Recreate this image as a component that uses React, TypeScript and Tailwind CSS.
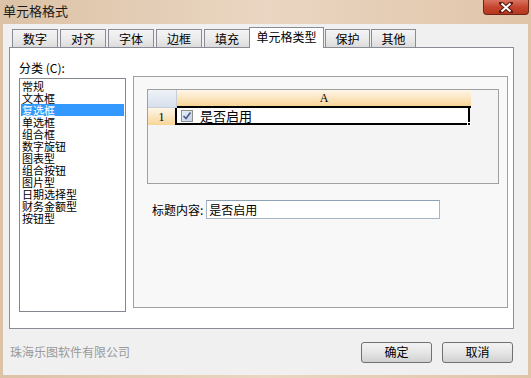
const tabs = ["数字", "对齐", "字体", "边框", "填充"];
const items = [
  "常规",
  "文本框",
  "复选框",
  "单选框",
  "组合框",
  "数字旋钮",
  "图表型",
  "组合按钮",
  "图片型",
  "日期选择型",
  "财务金额型",
  "按钮型",
];

function Tab({ label, w }: { label: string; w: string }) {
  return (
    <div
      className={`${w} h-[18px] flex items-center justify-center border border-b-0 border-[#898c95] bg-gradient-to-b from-[#f4f4f4] via-[#ebebeb] to-[#dcdcdc] text-[12px] leading-[12px] text-black`}
    >
      {label}
    </div>
  );
}

export default function App() {
  return (
    <div className="w-[531px] h-[378px] flex flex-col bg-gradient-to-r from-[#dcc2a6] via-[#ead6c2] to-[#e0c4a8] font-['Noto_Sans_CJK_SC',sans-serif] overflow-hidden">
      {/* Title bar */}
      <div className="h-[24px] flex items-start justify-between">
        <span className="pl-[3px] pt-[3px] text-[13px] leading-[15px] text-[#1a1a1a]">单元格格式</span>
        <div className="mr-[2px] w-[46px] h-[15px] rounded-b-[4px] border border-t-0 border-[#6e2418] bg-gradient-to-b from-[#d8735f] via-[#c6452e] to-[#b5371f] flex items-center justify-center">
          <svg width="14" height="11" viewBox="0 0 14 11">
            <path d="M2 1 L12 10 M12 1 L2 10" stroke="#5a1a10" strokeWidth="4" strokeLinecap="square" />
            <path d="M2.5 1.5 L11.5 9.5 M11.5 1.5 L2.5 9.5" stroke="#ffffff" strokeWidth="2" />
          </svg>
        </div>
      </div>

      {/* Client area */}
      <div className="mx-[3px] mb-[3px] flex-1 bg-[#f0f0f0] pl-[6px] pr-[15px] pt-[3px] flex flex-col">
        {/* Tabs */}
        <div className="ml-[3px] h-[20px] flex items-end relative z-10">
          {tabs.map((t, i) => (
            <div key={t} className={i < tabs.length - 1 ? "mr-[2px]" : ""}>
              <Tab label={t} w="w-[46px]" />
            </div>
          ))}
          <div className="-ml-[1px] -mb-[1px] w-[75px] h-[21px] border border-b-0 border-[#898c95] bg-white flex justify-center pt-[3px] text-[12px] leading-[12px] text-black">
            单元格类型
          </div>
          <div className="ml-[1px]">
            <Tab label="保护" w="w-[45px]" />
          </div>
          <div className="ml-[1px]">
            <Tab label="其他" w="w-[45px]" />
          </div>
        </div>

        {/* Panel */}
        <div className="w-[505px] h-[282px] border border-[#898c95] bg-white flex">
          <div className="ml-[9px] pt-[12px] flex flex-col">
            <div className="h-[16px] flex items-center text-[12px] leading-[12px] text-black">分类 (C):</div>
            <div className="mt-[2px] w-[107px] h-[234px] border border-[#828790] bg-white pt-[1px] pl-[1px]">
              {items.map((it) => (
                <div
                  key={it}
                  className={`h-[12px] w-[103px] pl-[1px] flex items-center text-[11px] leading-[11px] whitespace-nowrap ${
                    it === "复选框" ? "bg-[#3399ff] text-white" : "text-black"
                  }`}
                >
                  {it}
                </div>
              ))}
            </div>
          </div>

          <div className="ml-[7px] mt-[28px] w-[375px] h-[232px] border border-[#a0a0a0] bg-[#f8f8f8] pl-[13px] pt-[12px]">
            {/* Grid preview */}
            <div className="w-[352px] h-[95px] border border-[#a0a0a0] bg-[#f4f4f4] flex flex-col">
              <div className="flex h-[18px]">
                <div className="w-[29px] h-[18px] border-r border-b border-[#c8ced8] bg-gradient-to-b from-[#eef2f8] to-[#d8e0ec]" />
                <div className="w-[294px] h-[18px] border-b-2 border-black bg-gradient-to-b from-[#fef6e8] via-[#fbe6c2] to-[#f8d596] flex items-center justify-center text-[12px] leading-[12px] font-['Liberation_Serif',serif] text-black">
                  A
                </div>
                <div className="flex-1 h-[18px] bg-[#f4f4f4]" />
              </div>
              <div className="flex h-[17px]">
                <div className="w-[29px] h-[17px] border-r-2 border-black bg-gradient-to-b from-[#fef6e8] via-[#fbe6c2] to-[#f8d596] flex items-center justify-center text-[12px] leading-[12px] font-['Liberation_Serif',serif] text-black">
                  1
                </div>
                <div className="relative w-[293px] h-[17px] border-b-2 border-r-2 border-black bg-white flex items-center pl-[4px]">
                  <div className="w-[12px] h-[12px] border border-[#8e8f8f] bg-gradient-to-br from-[#e8eef8] to-[#c4d2e6] flex items-center justify-center">
                    <svg width="10" height="10" viewBox="0 0 10 10">
                      <path d="M1.5 5 L4 7.5 L8.5 1.5" stroke="#4a5a8a" strokeWidth="1.6" fill="none" />
                    </svg>
                  </div>
                  <span className="ml-[7px] text-[13px] leading-[13px] text-black">是否启用</span>
                  <div className="absolute -right-[3px] -bottom-[3px] w-[4px] h-[4px] bg-black border border-white" />
                </div>
              </div>
            </div>

            {/* Title content */}
            <div className="mt-[16px] ml-[5px] flex items-center">
              <span className="text-[12px] leading-[12px] text-black">标题内容:</span>
              <div className="ml-[3px] w-[234px] h-[19px] border border-[#a6b5c5] border-t-[#8fa1b5] bg-white flex items-center pl-[2px] text-[12px] leading-[12px] text-black">
                是否启用
              </div>
            </div>
          </div>
        </div>

        {/* Footer */}
        <div className="flex-1 flex items-center justify-between pl-[1px]">
          <span className="text-[12px] leading-[12px] text-[#9a9a9a]">珠海乐图软件有限公司</span>
          <div className="flex gap-[10px]">
            <div className="w-[71px] h-[21px] rounded-[3px] border border-[#707070] bg-gradient-to-b from-[#f3f3f3] via-[#e6e6e6] to-[#d0d0d0] flex items-center justify-center text-[12px] leading-[12px] text-black">
              确定
            </div>
            <div className="w-[71px] h-[21px] rounded-[3px] border border-[#707070] bg-gradient-to-b from-[#f3f3f3] via-[#e6e6e6] to-[#d0d0d0] flex items-center justify-center text-[12px] leading-[12px] text-black">
              取消
            </div>
          </div>
        </div>
      </div>
    </div>
  );
}
